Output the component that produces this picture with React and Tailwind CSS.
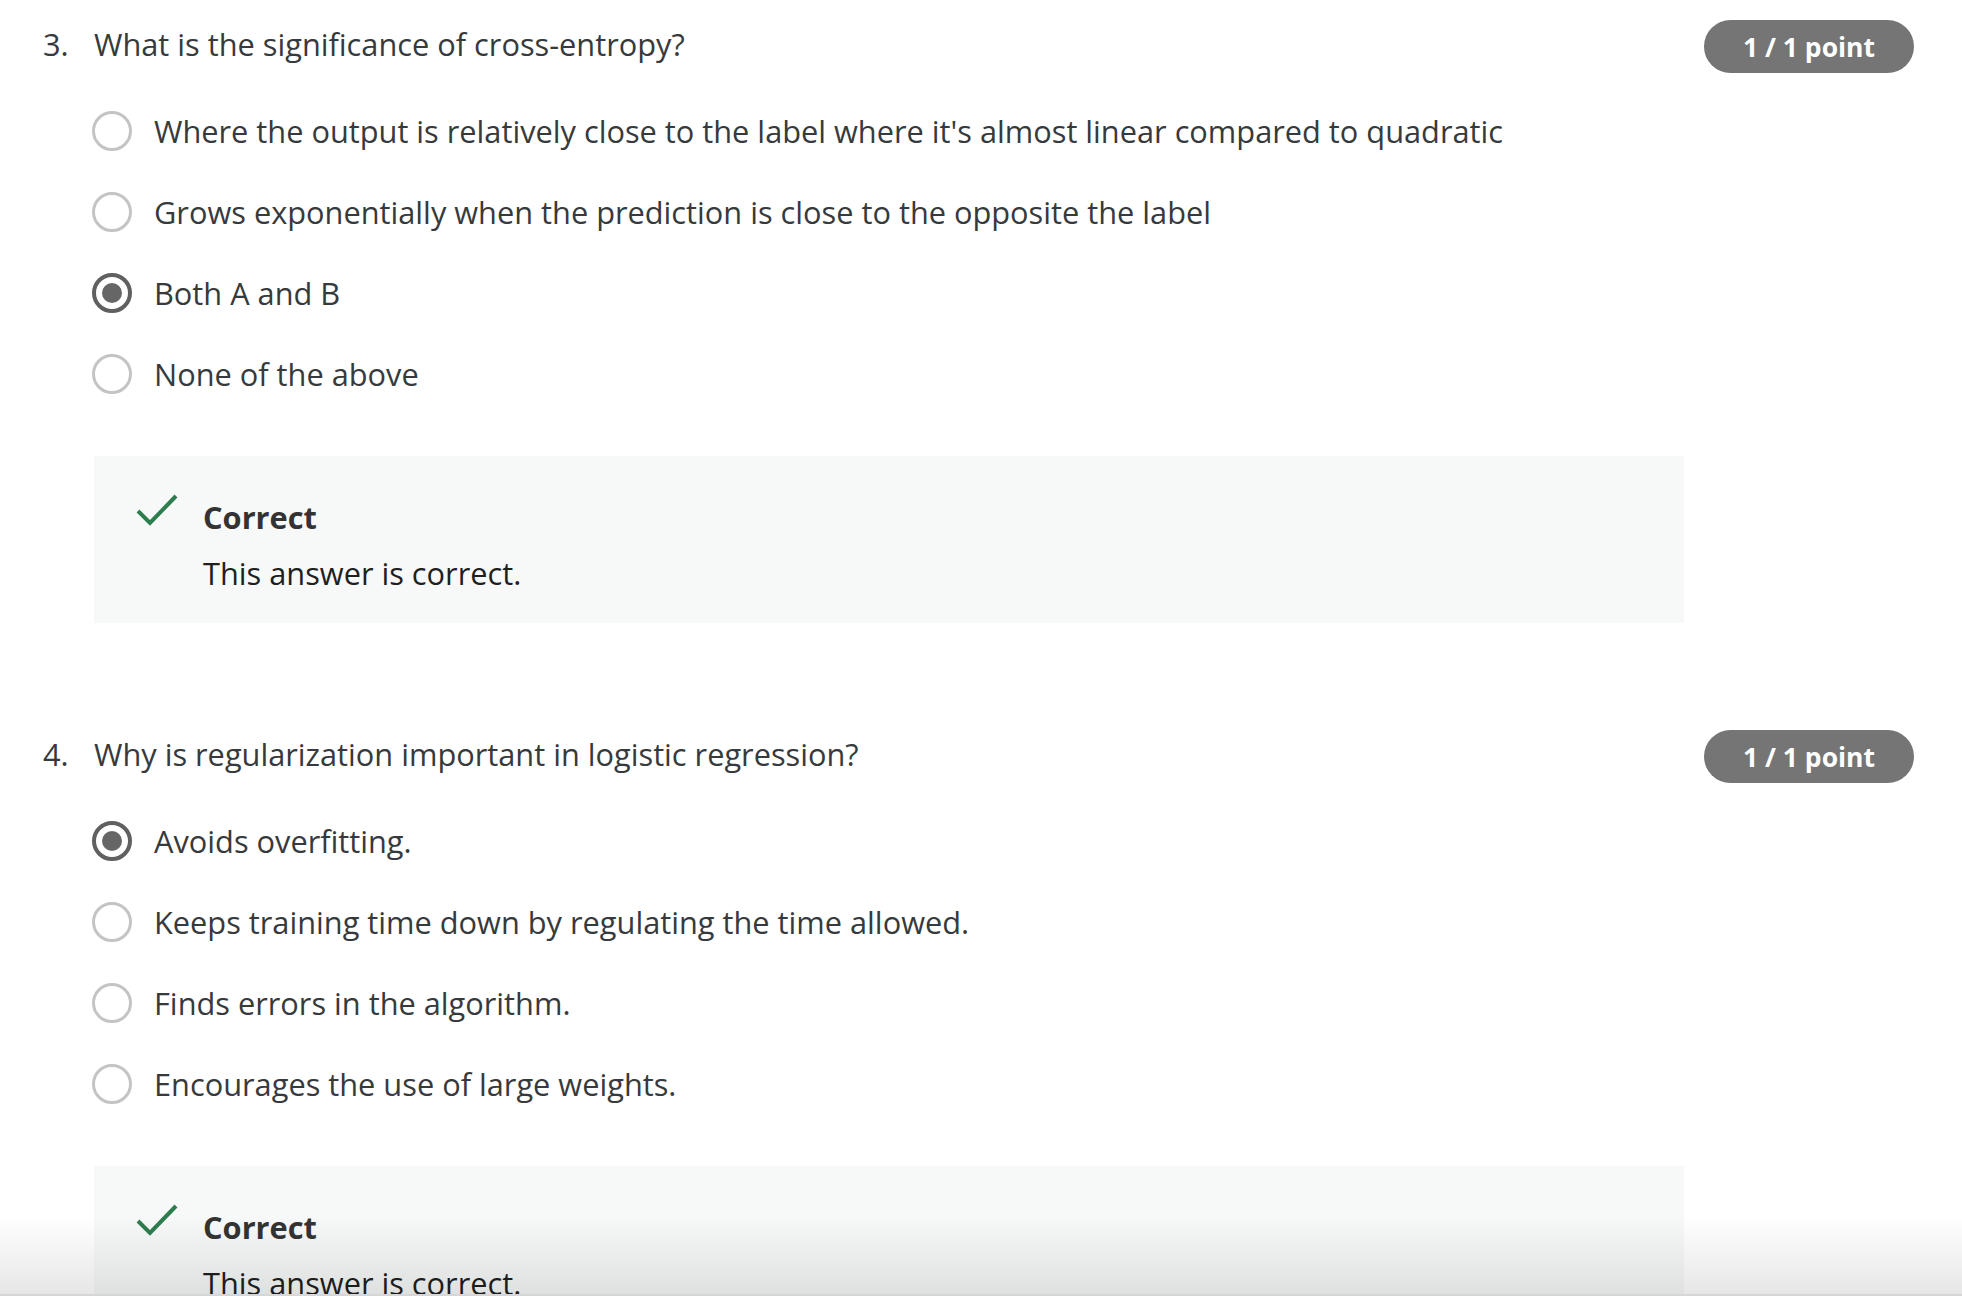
import { Fragment } from "react";

const QUESTIONS = [
  {
    num: "3.",
    title: "What is the significance of cross-entropy?",
    options: [
      "Where the output is relatively close to the label where it's almost linear compared to quadratic",
      "Grows exponentially when the prediction is close to the opposite the label",
      "Both A and B",
      "None of the above",
    ],
    picked: 2,
  },
  {
    num: "4.",
    title: "Why is regularization important in logistic regression?",
    options: [
      "Avoids overfitting.",
      "Keeps training time down by regulating the time allowed.",
      "Finds errors in the algorithm.",
      "Encourages the use of large weights.",
    ],
    picked: 0,
  },
];

function Radio({ on }) {
  if (on) {
    return (
      <span className="w-[40px] h-[40px] rounded-full border-[4px] border-[#606060] flex items-center justify-center shrink-0">
        <span className="w-[20px] h-[20px] rounded-full bg-[#666666]" />
      </span>
    );
  }
  return <span className="w-[40px] h-[40px] rounded-full border-[3px] border-[#c4c4c4] shrink-0" />;
}

function Feedback() {
  return (
    <div className="ml-[51px] w-[1590px] bg-[#f7f9f8] pl-[41px] pt-[44px] pb-[33px]">
      <div className="flex items-center h-[34px]">
        <svg width="44" height="34" viewBox="0 0 44 34" className="shrink-0 -mt-[14px]">
          <path d="M3 18 L15 30 L41 3" fill="none" stroke="#2e7d4e" strokeWidth="4" />
        </svg>
        <span className="ml-[24px] font-bold text-[#333333]">Correct</span>
      </div>
      <div className="ml-[68px] mt-[22px] h-[34px] leading-[34px] text-[#1f1f1f]">This answer is correct.</div>
    </div>
  );
}

function Question({ q }) {
  return (
    <section>
      <div className="flex items-center justify-between h-[53px]">
        <div className="flex items-center -mt-[6px]">
          <span className="w-[51px] shrink-0">{q.num}</span>
          <span>{q.title}</span>
        </div>
        <span className="h-[53px] w-[210px] rounded-full bg-[#757575] text-white text-[26.5px] font-bold flex items-center justify-center">
          1 / 1 point
        </span>
      </div>
      <ul className="mt-[17px] ml-[49px]">
        {q.options.map((o, i) => (
          <li key={o} className="h-[81px] flex items-center">
            <Radio on={i === q.picked} />
            <span className="ml-[22px]">{o}</span>
          </li>
        ))}
      </ul>
      <div className="mt-[42px]">
        <Feedback />
      </div>
    </section>
  );
}

export default function App() {
  return (
    <div
      className="relative h-[1296px] overflow-hidden bg-white text-[30.75px] leading-[34px] text-[#373a3c]"
      style={{ fontFamily: "'Open Sans', 'Noto Sans', sans-serif" }}
    >
      <div className="pt-[20px] pl-[43px] pr-[48px]">
        {QUESTIONS.map((q, i) => (
          <Fragment key={q.num}>
            {i > 0 && <div className="h-[107px]" />}
            <Question q={q} />
          </Fragment>
        ))}
      </div>
      <div className="absolute left-0 right-0 bottom-0 h-[80px] bg-gradient-to-b from-transparent to-black/10" />
      <div className="absolute left-0 right-0 bottom-0 h-[2px] bg-[#d6d6d6]" />
    </div>
  );
}
